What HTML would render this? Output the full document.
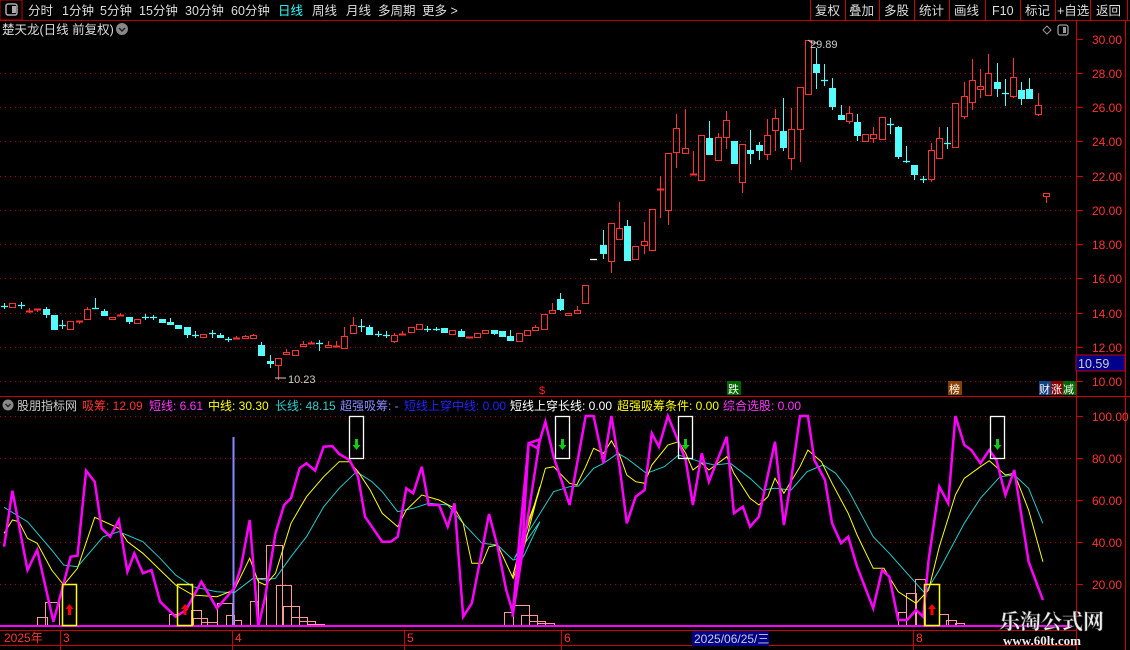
<!DOCTYPE html>
<html><head><meta charset="utf-8">
<style>
body{margin:0;background:#000;width:1130px;height:650px;overflow:hidden;font-family:"Liberation Sans","Noto Sans CJK SC",sans-serif;}
svg{display:block}
</style></head><body>
<svg id="s" width="1130" height="650" xmlns="http://www.w3.org/2000/svg" font-family="Liberation Sans, Noto Sans CJK SC, sans-serif">
<rect width="1130" height="650" fill="#000"/>
<!-- top bar -->
<line x1="0" y1="20.5" x2="1130" y2="20.5" stroke="#b00" />
<rect x="0" y="0" width="22" height="20" fill="none" stroke="#c00"/>
<rect x="6" y="4" width="11" height="11" rx="2" fill="none" stroke="#aaa" stroke-width="1.5"/><rect x="12" y="6" width="4" height="7" fill="#aaa"/>
<g font-size="12.5" fill="#ddd">
<text x="28" y="15">分时</text><text x="62" y="15">1分钟</text><text x="100" y="15">5分钟</text><text x="139" y="15">15分钟</text><text x="185" y="15">30分钟</text><text x="231" y="15">60分钟</text>
<text x="278" y="15" fill="#3ff">日线</text><text x="312" y="15">周线</text><text x="346" y="15">月线</text><text x="378" y="15">多周期</text><text x="422" y="15">更多 &gt;</text>
</g>
<g stroke="#c00"><line x1="810.5" y1="0" x2="810.5" y2="20"/><line x1="845.5" y1="0" x2="845.5" y2="20"/><line x1="879.5" y1="0" x2="879.5" y2="20"/><line x1="914.5" y1="0" x2="914.5" y2="20"/><line x1="949.5" y1="0" x2="949.5" y2="20"/><line x1="985.5" y1="0" x2="985.5" y2="20"/><line x1="1020.5" y1="0" x2="1020.5" y2="20"/><line x1="1055.5" y1="0" x2="1055.5" y2="20"/><line x1="1090.5" y1="0" x2="1090.5" y2="20"/><line x1="1127.5" y1="0" x2="1127.5" y2="20"/></g>
<g font-size="12.5" fill="#ddd"><text x="815" y="15">复权</text><text x="849" y="15">叠加</text><text x="884" y="15">多股</text><text x="919" y="15">统计</text><text x="954" y="15">画线</text><text x="992" y="15">F10</text><text x="1025" y="15">标记</text><text x="1057" y="15">+自选</text><text x="1096" y="15">返回</text></g>
<text x="2" y="34" font-size="12.5" fill="#ddd">楚天龙(日线 前复权)</text>
<circle cx="122" cy="29" r="6" fill="#888"/><path d="M119 28 l3 3 l3 -3" stroke="#222" stroke-width="1.5" fill="none"/>
<path d="M1047 26 l4 4 l-4 4 l-4 -4z" fill="none" stroke="#999"/>
<rect x="1058" y="25" width="10" height="10" rx="2" fill="none" stroke="#999" stroke-width="1.3"/><rect x="1063" y="27" width="3" height="6" fill="#999"/>
<!-- axis -->
<line x1="1076.5" y1="21" x2="1076.5" y2="650" stroke="#c00"/>
<line x1="1125.5" y1="21" x2="1125.5" y2="650" stroke="#c00"/>
<line x1="0" y1="396.5" x2="1130" y2="396.5" stroke="#c00"/>
<g id="grid" stroke="#a00" stroke-dasharray="1,4"></g>
<g id="plabels" font-size="12" fill="#f33"></g>
<rect x="1076" y="355" width="49" height="16" fill="#00008b" stroke="#c00"/>
<text x="1078" y="368" font-size="12.5" fill="#ccc">10.59</text>
<g id="candles"></g>
<text x="810" y="48" font-size="11" fill="#ccc">29.89</text><path d="M808 40 l4 3 h6" stroke="#ccc" fill="none"/>
<text x="288" y="383" font-size="11" fill="#ccc">10.23</text><path d="M275 378 h11" stroke="#ccc" fill="none"/>
<g font-size="11" fill="#fff">
<rect x="727" y="381" width="14" height="14" fill="#060"/><text x="728" y="393">跌</text>
<rect x="948" y="381" width="14" height="14" fill="#8a4000"/><text x="949" y="393">榜</text>
<rect x="1039" y="381" width="12" height="14" fill="#124080"/><text x="1039" y="393">财</text>
<rect x="1051" y="381" width="12" height="14" fill="#800"/><text x="1051" y="393">涨</text>
<rect x="1063" y="381" width="13" height="14" fill="#060"/><text x="1063" y="393">减</text>
</g>
<text x="539" y="394" font-size="11" fill="#f22">$</text>
<!-- legend -->
<circle cx="8" cy="405" r="5.5" fill="#888"/><path d="M5.5 404 l2.5 2.5 l2.5 -2.5" stroke="#222" stroke-width="1.4" fill="none"/>
<text y="410" font-size="12" xml:space="preserve"><tspan x="17" fill="#ccc">股朋指标网</tspan><tspan x="82" fill="#f33">吸筹: 12.09</tspan><tspan x="149" fill="#f3f">短线: 6.61</tspan><tspan x="208" fill="#ff0">中线: 30.30</tspan><tspan x="275" fill="#3cc">长线: 48.15</tspan><tspan x="340" fill="#88f">超强吸筹: -</tspan><tspan x="404" fill="#22f">短线上穿中线: 0.00</tspan><tspan x="510" fill="#fff">短线上穿长线: 0.00</tspan><tspan x="617" fill="#ff0">超强吸筹条件: 0.00</tspan><tspan x="723" fill="#f3f">综合选股: 0.00</tspan></text>
<g id="ind"></g>
<!-- bottom axis -->
<line x1="0" y1="630.5" x2="1076" y2="630.5" stroke="#c00"/>
<line x1="0" y1="645.5" x2="1076" y2="645.5" stroke="#c00"/>
<g stroke="#c00"><line x1="60.5" y1="630" x2="60.5" y2="650"/><line x1="232.5" y1="630" x2="232.5" y2="650"/><line x1="404.5" y1="630" x2="404.5" y2="650"/><line x1="561.5" y1="630" x2="561.5" y2="650"/><line x1="913.5" y1="630" x2="913.5" y2="650"/></g>
<g font-size="12" fill="#f33"><text x="4" y="642">2025年</text><text x="63" y="642">3</text><text x="235" y="642">4</text><text x="407" y="642">5</text><text x="564" y="642">6</text><text x="916" y="642">8</text></g>
<rect x="692" y="631" width="77" height="15" fill="#00008b"/><text x="694" y="643" font-size="12" fill="#ccc">2025/06/25/三</text>
<text x="999" y="629" font-size="21" font-weight="bold" fill="#eee" font-family="Liberation Serif, Noto Serif CJK SC, serif" stroke="#555" stroke-width="0.5">乐淘公式网</text>
<text x="1003" y="645" font-size="13" font-weight="bold" fill="#eee" font-family="Liberation Serif, serif">www.60lt.com</text>
</svg>
<script>
var NS="http://www.w3.org/2000/svg";
function el(p,t,a){var e=document.createElementNS(NS,t);for(var k in a)e.setAttribute(k,a[k]);document.getElementById(p).appendChild(e);return e;}
// grid
[73,107,141,176,210,244,278,313,347,381].forEach(function(y){el('grid','line',{x1:0,x2:1072,y1:y+.5,y2:y+.5});});
[416,458,500,542,584].forEach(function(y){el('grid','line',{x1:0,x2:1072,y1:y+.5,y2:y+.5});});
var pl=['30.00','28.00','26.00','24.00','22.00','20.00','18.00','16.00','14.00','12.00','10.00'];
[39,73,107,141,176,210,244,278,313,347,381].forEach(function(y,i){var t=el('plabels','text',{x:1092,y:y+5});t.textContent=pl[i];el('plabels','line',{x1:1076,x2:1083,y1:y+.5,y2:y+.5,stroke:'#c00'});});
['100.00','80.00','60.00','40.00','20.00'].forEach(function(s,i){var y=416+i*42;var t=el('plabels','text',{x:1092,y:y+5});t.textContent=s;el('plabels','line',{x1:1076,x2:1083,y1:y+.5,y2:y+.5,stroke:'#c00'});});
// candles: [top,bot,high,low,color] c=red r / cyan c / x cross
var A=[[306,306,303,309,'c'],[303,307,0,0,'r'],[305,305,302,309,'c'],[311,311,308,313,'r'],[309,309,0,312,'r'],[309,314,307,318,'c'],[315,329,0,330,'c'],[325,325,320,329,'c'],[321,329,0,0,'r'],[321,321,0,324,'r'],[309,319,307,0,'r'],[308,308,298,0,'c'],[311,315,309,0,'c'],[317,319,0,0,'r'],[315,315,313,0,'r'],[317,321,0,324,'c'],[319,323,0,0,'r'],[317,317,314,320,'c'],[317,317,315,320,'c'],[319,322,0,0,'c'],[322,324,318,0,'c'],[325,328,0,0,'c'],[327,334,0,338,'c'],[335,335,331,338,'c'],[334,337,0,0,'r'],[333,333,330,338,'c'],[335,337,333,0,'c'],[339,339,337,342,'c'],[338,338,336,0,'r'],[336,338,335,0,'r'],[335,338,334,0,'r'],[345,355,342,0,'c'],[361,363,355,368,'c'],[358,365,0,380,'r'],[352,354,349,0,'r'],[350,355,0,0,'r'],[344,346,341,0,'r'],[343,343,341,0,'r'],[343,343,340,351,'c'],[345,347,341,0,'r'],[346,346,341,0,'r'],[336,348,327,0,'r'],[325,333,317,0,'r'],[326,326,319,332,'c'],[327,334,325,0,'c'],[334,334,331,337,'c'],[335,335,331,338,'c'],[335,341,333,343,'r'],[334,334,331,0,'r'],[327,332,0,0,'r'],[324,329,0,0,'r'],[329,329,326,332,'c'],[329,329,327,331,'c'],[328,332,0,333,'c'],[330,334,0,0,'r'],[331,336,329,0,'c'],[337,337,0,0,'r'],[333,337,0,0,'r'],[330,333,0,0,'r'],[330,333,0,335,'c'],[331,336,0,0,'c'],[336,340,330,0,'c'],[333,341,0,0,'r'],[330,335,0,0,'r'],[327,330,325,0,'r'],[314,329,0,0,'r'],[310,313,303,0,'r'],[299,309,293,311,'c'],[313,315,0,0,'r'],[310,313,306,0,'r'],[285,303,0,304,'r']];
var B=[[259,259,0,0,'w',593],[245,253,230,259,'c',603],[223,261,0,273,'r',611],[228,239,202,0,'r',619],[226,260,220,0,'c',627],[246,259,0,0,'r',635],[241,245,222,254,'r',644],[209,250,0,0,'r',652],[189,189,176,218,'r',660],[153,210,0,225,'r',668],[128,152,114,168,'r',676],[148,153,109,0,'r',685],[174,174,151,0,'r',693],[135,180,0,0,'r',701],[138,154,121,0,'c',709],[137,160,133,0,'r',718],[120,137,111,149,'r',726],[141,163,0,0,'c',734],[144,182,0,193,'r',742],[150,153,130,164,'c',750],[145,150,142,160,'c',759],[135,154,119,160,'r',767],[118,130,109,151,'r',775],[131,147,98,151,'c',783],[129,158,108,170,'r',791],[87,129,0,162,'r',800],[40,94,0,0,'r',808],[64,72,48,89,'c',816],[80,80,64,86,'c',824],[88,106,78,110,'c',832],[115,119,105,120,'c',841],[113,121,106,124,'r',849],[122,135,114,141,'c',857],[134,141,0,0,'r',865],[134,138,127,143,'r',873],[117,139,0,0,'r',882],[124,124,118,134,'c',890],[127,156,126,159,'c',898],[161,161,146,163,'c',906],[165,174,0,180,'c',914],[179,179,176,183,'c',923],[150,179,143,182,'r',931],[138,158,127,0,'r',939],[143,143,127,149,'c',947],[103,147,0,0,'r',955],[96,116,82,119,'r',964],[80,102,59,110,'r',972],[86,89,69,98,'r',980],[73,95,54,0,'r',988],[82,88,63,97,'c',997],[93,93,79,106,'c',1005],[77,96,58,98,'r',1013],[90,98,82,105,'c',1021],[89,98,78,0,'c',1029],[105,114,93,116,'r',1038],[193,196,0,203,'r',1046]];
function candle(d,x){var c=d[4]=='r'?'#ff3232':(d[4]=='w'?'#fff':'#54fcfc');var t=d[0],b=d[1],h=d[2]||t,l=d[3]||b;
 if(h<t)el('candles','line',{x1:x+.5,x2:x+.5,y1:h,y2:t,stroke:c});
 if(l>b)el('candles','line',{x1:x+.5,x2:x+.5,y1:b,y2:l,stroke:c});
 if(b-t<2){el('candles','line',{x1:x-3,x2:x+4,y1:t+.5,y2:t+.5,stroke:c,'stroke-width':d[4]=='r'?2:1.3});}
 else if(d[4]=='r')el('candles','rect',{x:x-2.5,y:t+.5,width:6,height:b-t,fill:'none',stroke:c});
 else el('candles','rect',{x:x-3,y:t,width:7,height:b-t+1,fill:c});}
A.forEach(function(d,i){candle(d,Math.round(4+i*(581/(A.length-1))));});
B.forEach(function(d){candle(d,d[5]);});
// indicator
function pts(arr,x0,sx){return arr.map(function(p){return (x0+p[0]/sx).toFixed(1)+','+(410+p[1]/3).toFixed(1);}).join(' ');}
// pink bars
var bars=[[37,47,617],[45,59,602],[169,177,614],[191,201,610],[193,207,618],[201,217,622],[217,232,603],[226,234,615],[234,241,620],[250,257,601],[258,266,578],[266,282,545],[276,291,585],[283,299,606],[291,307,617],[299,315,621],[307,324,624],
[504,513,612],[513,529,605],[521,537,615],[529,545,621],[537,554,623],[898,906,612],[906,916,593],[915,925,579],[939,948,614],[946,956,620],[955,964,623]];
bars.forEach(function(b){el('ind','rect',{x:b[0]+.5,y:b[2]+.5,width:b[1]-b[0],height:626-b[2],fill:'none',stroke:'#f99'});});
el('ind','line',{x1:233.5,x2:233.5,y1:437,y2:626,stroke:'#88f','stroke-width':2});
var cy7=[[12,292],[80,335],[150,420],[185,465],[225,470],[300,380],[345,365],[415,395],[465,445],[510,495],[560,530],[630,545],[680,548],[735,505],[770,510],[800,505],[845,440],[890,380],[940,290],[985,235],[1035,185],[1080,215],[1110,245],[1155,305],[1200,295],[1245,280],[1300,285],[1345,340],[1400,400],[1445,405],[1490,450],[1520,440],[1568,335]];
var cy8=[[0,410],[40,445],[80,365],[150,245],[195,230],[220,228],[262,175],[290,160],[330,130],[355,145],[410,190],[460,170],[500,135],[560,155],[600,165],[645,160],[700,205],[735,240],[770,235],[815,240],[860,185],[905,165],[940,190],[975,240],[1045,380],[1090,430],[1140,490],[1190,550],[1230,480],[1300,340],[1345,265],[1400,200],[1440,195],[1480,235],[1520,340]];
var ye7=[[12,370],[36,330],[55,335],[80,385],[108,400],[150,480],[185,525],[225,475],[275,322],[345,355],[370,395],[415,430],[465,480],[510,525],[560,555],[630,560],[680,540],[725,445],[750,515],[770,525],[800,490],[845,340],[890,260],[940,200],[985,155],[1015,155],[1040,185],[1075,240],[1110,310],[1155,350],[1180,300],[1225,255],[1275,270],[1320,295],[1345,340],[1370,460],[1400,460],[1420,410],[1445,405],[1490,505],[1520,420],[1568,230]];
var ye8=[[0,425],[35,500],[55,420],[80,330],[105,260],[127,175],[150,170],[195,220],[215,225],[240,170],[262,115],[290,130],[312,92],[335,135],[355,195],[380,215],[405,220],[425,165],[470,105],[500,95],[520,130],[540,180],[565,160],[585,180],[635,140],[655,190],[700,265],[725,285],[750,260],[770,205],[795,250],[840,170],[862,120],[900,155],[930,220],[975,310],[1000,375],[1045,475],[1075,475],[1115,545],[1165,580],[1200,540],[1230,410],[1275,255],[1300,205],[1345,170],[1370,152],[1415,195],[1440,190],[1480,300],[1520,455]];
var mg7=[[12,410],[36,242],[80,480],[108,420],[155,635],[185,520],[205,440],[225,437],[250,182],[275,215],[295,355],[320,380],[345,330],[370,485],[390,430],[415,490],[440,480],[465,575],[510,620],[540,600],[585,515],[630,595],[680,535],[700,470],[725,330],[750,650],[770,560],[800,370],[825,285],[845,265],[870,175],[890,160],[915,182],[940,110],[965,108],[985,132],[1015,150],[1040,200],[1060,320],[1110,395],[1135,395],[1155,380],[1180,235],[1200,250],[1225,170],[1245,285],[1275,285],[1300,350],[1320,280],[1345,620],[1370,580],[1420,312],[1445,410],[1470,540],[1490,610],[1520,360],[1535,100],[1568,88]];
var mg8=[[0,440],[35,620],[55,380],[80,100],[105,115],[127,35],[150,140],[195,285],[240,18],[262,18],[290,160],[312,18],[335,170],[355,340],[380,260],[405,240],[425,70],[445,110],[470,18],[490,70],[520,150],[540,285],[565,130],[585,215],[605,160],[635,80],[655,310],[680,290],[700,350],[725,320],[770,95],[795,345],[815,210],[840,18],[862,18],[880,150],[910,210],[930,340],[955,400],[975,380],[1000,470],[1045,595],[1070,480],[1090,500],[1115,630],[1140,630],[1165,600],[1185,620],[1200,450],[1230,230],[1255,280],[1275,18],[1300,105],[1320,120],[1345,160],[1370,120],[1390,150],[1415,255],[1440,180],[1480,455],[1520,570]];
el('ind','polyline',{points:pts(cy7,0,2.904)+' '+pts(cy8.slice(1),500,2.8),fill:'none',stroke:'#2cc','stroke-width':1});
el('ind','polyline',{points:pts(ye7,0,2.904)+' '+pts(ye8.slice(1),500,2.8),fill:'none',stroke:'#ff0','stroke-width':1});
el('ind','polyline',{points:pts(mg7,0,2.904)+' '+pts(mg8.slice(1),500,2.8),fill:'none',stroke:'#f0f','stroke-width':2.5});
el('ind','line',{x1:0,x2:1072,y1:626,y2:626,stroke:'#f0f','stroke-width':2});
[[62,76],[177,192],[924,939]].forEach(function(b){el('ind','rect',{x:b[0]+.5,y:584.5,width:b[1]-b[0],height:41,fill:'none',stroke:'#ff0','stroke-width':1.5});
 var cx=(b[0]+b[1])/2+.5;el('ind','path',{d:'M'+cx+' 604 l-4 5 h2.5 v6 h3 v-6 h2.5z',fill:'#f00'});});
[349,555,678,990].forEach(function(x){el('ind','rect',{x:x+.5,y:416.5,width:14,height:42,fill:'none',stroke:'#fff','stroke-width':1.3});
 var cx=x+7.5;el('ind','path',{d:'M'+cx+' 450 l-4 -5 h2.5 v-6 h3 v6 h2.5z',fill:'#1c1'});});
</script>
</body></html>
